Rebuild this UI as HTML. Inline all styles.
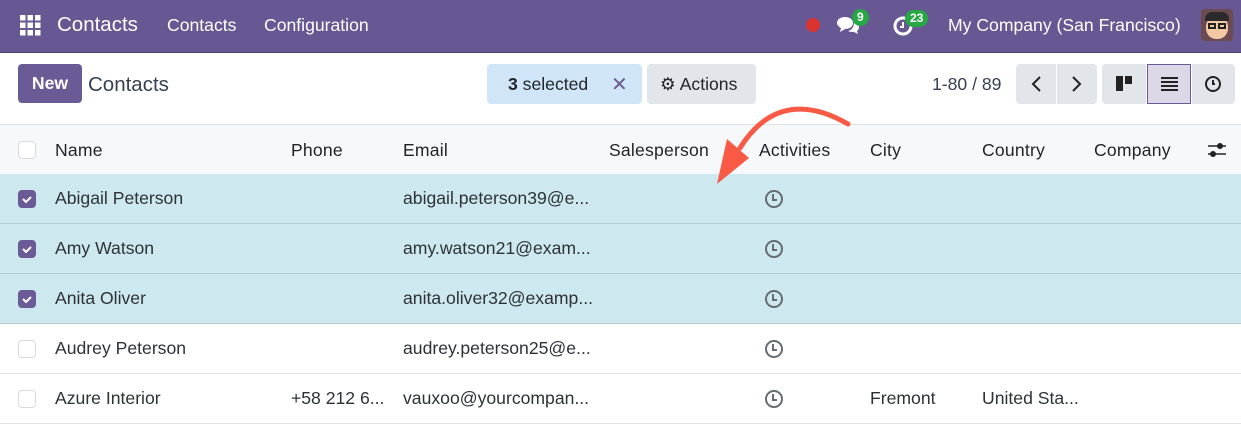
<!DOCTYPE html>
<html><head><meta charset="utf-8"><style>
*{box-sizing:border-box;margin:0;padding:0}
body{width:1241px;height:423px;overflow:hidden;background:#fff;font-family:"Liberation Sans",sans-serif;color:#212529;position:relative}
.nav{position:absolute;left:0;top:0;width:1241px;height:53px;background:#675893;border-bottom:1px solid #4e4370;color:#fff}
.nav span{position:absolute;top:15px;font-size:17.6px}
.abs{position:absolute}
.badge{position:absolute;background:#28a745;color:#fff;font-size:12px;font-weight:bold;border-radius:9px;height:17px;line-height:17px;text-align:center;padding:0 5px}
.btn{position:absolute;top:64px;height:40px;background:#e2e5e9;border-radius:4px}
.hdr{position:absolute;left:0;top:124px;width:1241px;height:51px;background:#f7f8fa;border-top:1px solid #dee2e6;border-bottom:1px solid #dee2e6}
.row{position:absolute;left:0;width:1241px;height:50px;border-bottom:1px solid #dee2e6}
.sel{background:#cde8ee;border-bottom-color:#b5ced4}
.t{position:absolute;font-size:17.6px;top:14px;white-space:nowrap}
.hdr .t{top:15px;color:#1f2328;letter-spacing:0.2px}
.cb{position:absolute;left:18px;top:16px;width:18px;height:18px;border-radius:4px;border:1px solid #d8dadd;background:#fff}
.cb.on{background:#6a5a96;border-color:#6a5a96}
.clk{position:absolute;left:765px;top:16px;width:18px;height:18px;border:2.5px solid #666c73;border-radius:50%}
.clk:after{content:"";position:absolute;left:5px;top:2px;width:3px;height:5px;border-left:2px solid #666c73;border-bottom:2px solid #666c73}
.row .t{color:#2d3238}
</style></head><body>
<div class="nav">
  <svg class="abs" style="left:20px;top:15px" width="21" height="21"><g fill="#fff"><rect x="0" y="0" width="5.5" height="5.5"/><rect x="7.5" y="0" width="5.5" height="5.5"/><rect x="15" y="0" width="5.5" height="5.5"/><rect x="0" y="7.5" width="5.5" height="5.5"/><rect x="7.5" y="7.5" width="5.5" height="5.5"/><rect x="15" y="7.5" width="5.5" height="5.5"/><rect x="0" y="15" width="5.5" height="5.5"/><rect x="7.5" y="15" width="5.5" height="5.5"/><rect x="15" y="15" width="5.5" height="5.5"/></g></svg>
  <span style="left:57px;font-size:20.5px;top:13px">Contacts</span>
  <span style="left:167px">Contacts</span>
  <span style="left:264px">Configuration</span>
  <div class="abs" style="left:806px;top:18px;width:14px;height:14px;border-radius:50%;background:#d9342f"></div>
  <svg class="abs" style="left:835px;top:14px" width="26" height="22"><path d="M2 9c0-4 4-6 8-6s8 2 8 6-4 6-8 6l-5 3 1-4c-2-1-4-3-4-5z" fill="#fff"/><path d="M19 8c3 1 5 3 5 5 0 2-1 3-2 4l1 3-4-2c-2 0-4 0-6-1 4-1 6-4 6-9z" fill="#fff"/></svg>
  <div class="badge" style="left:852px;top:9px">9</div>
  <svg class="abs" style="left:892px;top:14px" width="22" height="22"><circle cx="11" cy="12" r="8" fill="none" stroke="#fff" stroke-width="3"/><path d="M11 8v5h-3" fill="none" stroke="#fff" stroke-width="2"/></svg>
  <div class="badge" style="left:905px;top:10px">23</div>
  <span style="left:948px">My Company (San Francisco)</span>
  <div class="abs" style="left:1201px;top:9px;width:32px;height:32px;border-radius:4px;background:#6b4a52;overflow:hidden"><div style="position:absolute;left:5px;top:6px;width:22px;height:24px;border-radius:50% 50% 45% 45%;background:#f2c9a3"></div><div style="position:absolute;left:4px;top:3px;width:24px;height:9px;border-radius:8px 8px 2px 2px;background:#2a2a2a"></div><div style="position:absolute;left:7px;top:14px;width:8px;height:6px;border:2px solid #222"></div><div style="position:absolute;left:17px;top:14px;width:8px;height:6px;border:2px solid #222"></div></div>
</div>

<div class="abs" style="left:18px;top:64px;width:64px;height:39px;background:#6a5a96;border-radius:4px;color:#fff;font-weight:bold;font-size:17.6px;text-align:center;line-height:39px">New</div>
<div class="abs" style="left:88px;top:73px;font-size:20.5px;color:#374151">Contacts</div>

<div class="abs" style="left:487px;top:64px;width:155px;height:40px;background:#d0e6f8;border-radius:4px"><span class="abs" style="left:21px;top:10px;font-size:17.6px"><b>3</b> selected</span><span class="abs" style="left:124px;top:8px;font-size:20px;color:#6a5a96">✕</span></div>
<div class="btn" style="left:647px;width:109px"><span class="abs" style="left:13px;top:10px;font-size:17.6px">⚙ Actions</span></div>

<div class="abs" style="left:932px;top:74px;font-size:17.6px;color:#374151">1-80 / 89</div>
<div class="btn" style="left:1016px;width:40px;border-radius:4px 0 0 4px"><svg class="abs" style="left:14px;top:12px" width="12" height="16"><path d="M10 1 3 8l7 7" fill="none" stroke="#222" stroke-width="2"/></svg></div>
<div class="btn" style="left:1057px;width:40px;border-radius:0 4px 4px 0"><svg class="abs" style="left:14px;top:12px" width="12" height="16"><path d="M2 1l7 7-7 7" fill="none" stroke="#222" stroke-width="2"/></svg></div>
<div class="btn" style="left:1102px;width:44px;border-radius:4px 0 0 4px"><div class="abs" style="left:14px;top:12px;width:7px;height:15px;background:#222"></div><div class="abs" style="left:23px;top:12px;width:7px;height:8px;background:#222"></div></div>
<div class="btn" style="left:1147px;width:44px;border-radius:0;background:#dcd8e8;border:1px solid #6a5a96"><div class="abs" style="left:13px;top:12px;width:17px;height:14px;background:repeating-linear-gradient(#222 0 2px,transparent 2px 4px)"></div></div>
<div class="btn" style="left:1192px;width:43px;border-radius:0 4px 4px 0"><div class="abs" style="left:13px;top:12px;width:16px;height:16px;border:2px solid #222;border-radius:50%"></div><div class="abs" style="left:20px;top:16px;width:3px;height:5px;border-left:2px solid #222;border-bottom:2px solid #222"></div></div>

<div class="hdr">
  <div class="cb" style="top:16px"></div>
  <span class="t" style="left:55px">Name</span>
  <span class="t" style="left:291px">Phone</span>
  <span class="t" style="left:403px">Email</span>
  <span class="t" style="left:609px">Salesperson</span>
  <span class="t" style="left:759px">Activities</span>
  <span class="t" style="left:870px">City</span>
  <span class="t" style="left:982px">Country</span>
  <span class="t" style="left:1094px">Company</span>
  <svg class="abs" style="left:1207px;top:16px" width="20" height="18"><path d="M1 5h18M1 13h18" stroke="#222" stroke-width="1.5"/><circle cx="13" cy="5" r="3" fill="#222"/><circle cx="6" cy="13" r="3" fill="#222"/></svg>
</div>

<div class="row sel" style="top:174px"><div class="cb on"><svg width="16" height="16"><path d="M4 8l3 3 5-5" fill="none" stroke="#fff" stroke-width="2"/></svg></div><span class="t" style="left:55px">Abigail Peterson</span><span class="t" style="left:403px">abigail.peterson39@e...</span><div class="clk"></div></div>
<div class="row sel" style="top:224px"><div class="cb on"><svg width="16" height="16"><path d="M4 8l3 3 5-5" fill="none" stroke="#fff" stroke-width="2"/></svg></div><span class="t" style="left:55px">Amy Watson</span><span class="t" style="left:403px">amy.watson21@exam...</span><div class="clk"></div></div>
<div class="row sel" style="top:274px"><div class="cb on"><svg width="16" height="16"><path d="M4 8l3 3 5-5" fill="none" stroke="#fff" stroke-width="2"/></svg></div><span class="t" style="left:55px">Anita Oliver</span><span class="t" style="left:403px">anita.oliver32@examp...</span><div class="clk"></div></div>
<div class="row" style="top:324px"><div class="cb"></div><span class="t" style="left:55px">Audrey Peterson</span><span class="t" style="left:403px">audrey.peterson25@e...</span><div class="clk"></div></div>
<div class="row" style="top:374px"><div class="cb"></div><span class="t" style="left:55px">Azure Interior</span><span class="t" style="left:291px">+58 212 6...</span><span class="t" style="left:403px">vauxoo@yourcompan...</span><div class="clk"></div><span class="t" style="left:870px">Fremont</span><span class="t" style="left:982px">United Sta...</span></div>

<svg class="abs" style="left:700px;top:100px" width="160" height="90"><path d="M148 24C110 2 70 0 40 48" fill="none" stroke="#f85a45" stroke-width="5" stroke-linecap="round"/><path d="M17 84 27 39 49 58z" fill="#f85a45"/></svg>
</body></html>
